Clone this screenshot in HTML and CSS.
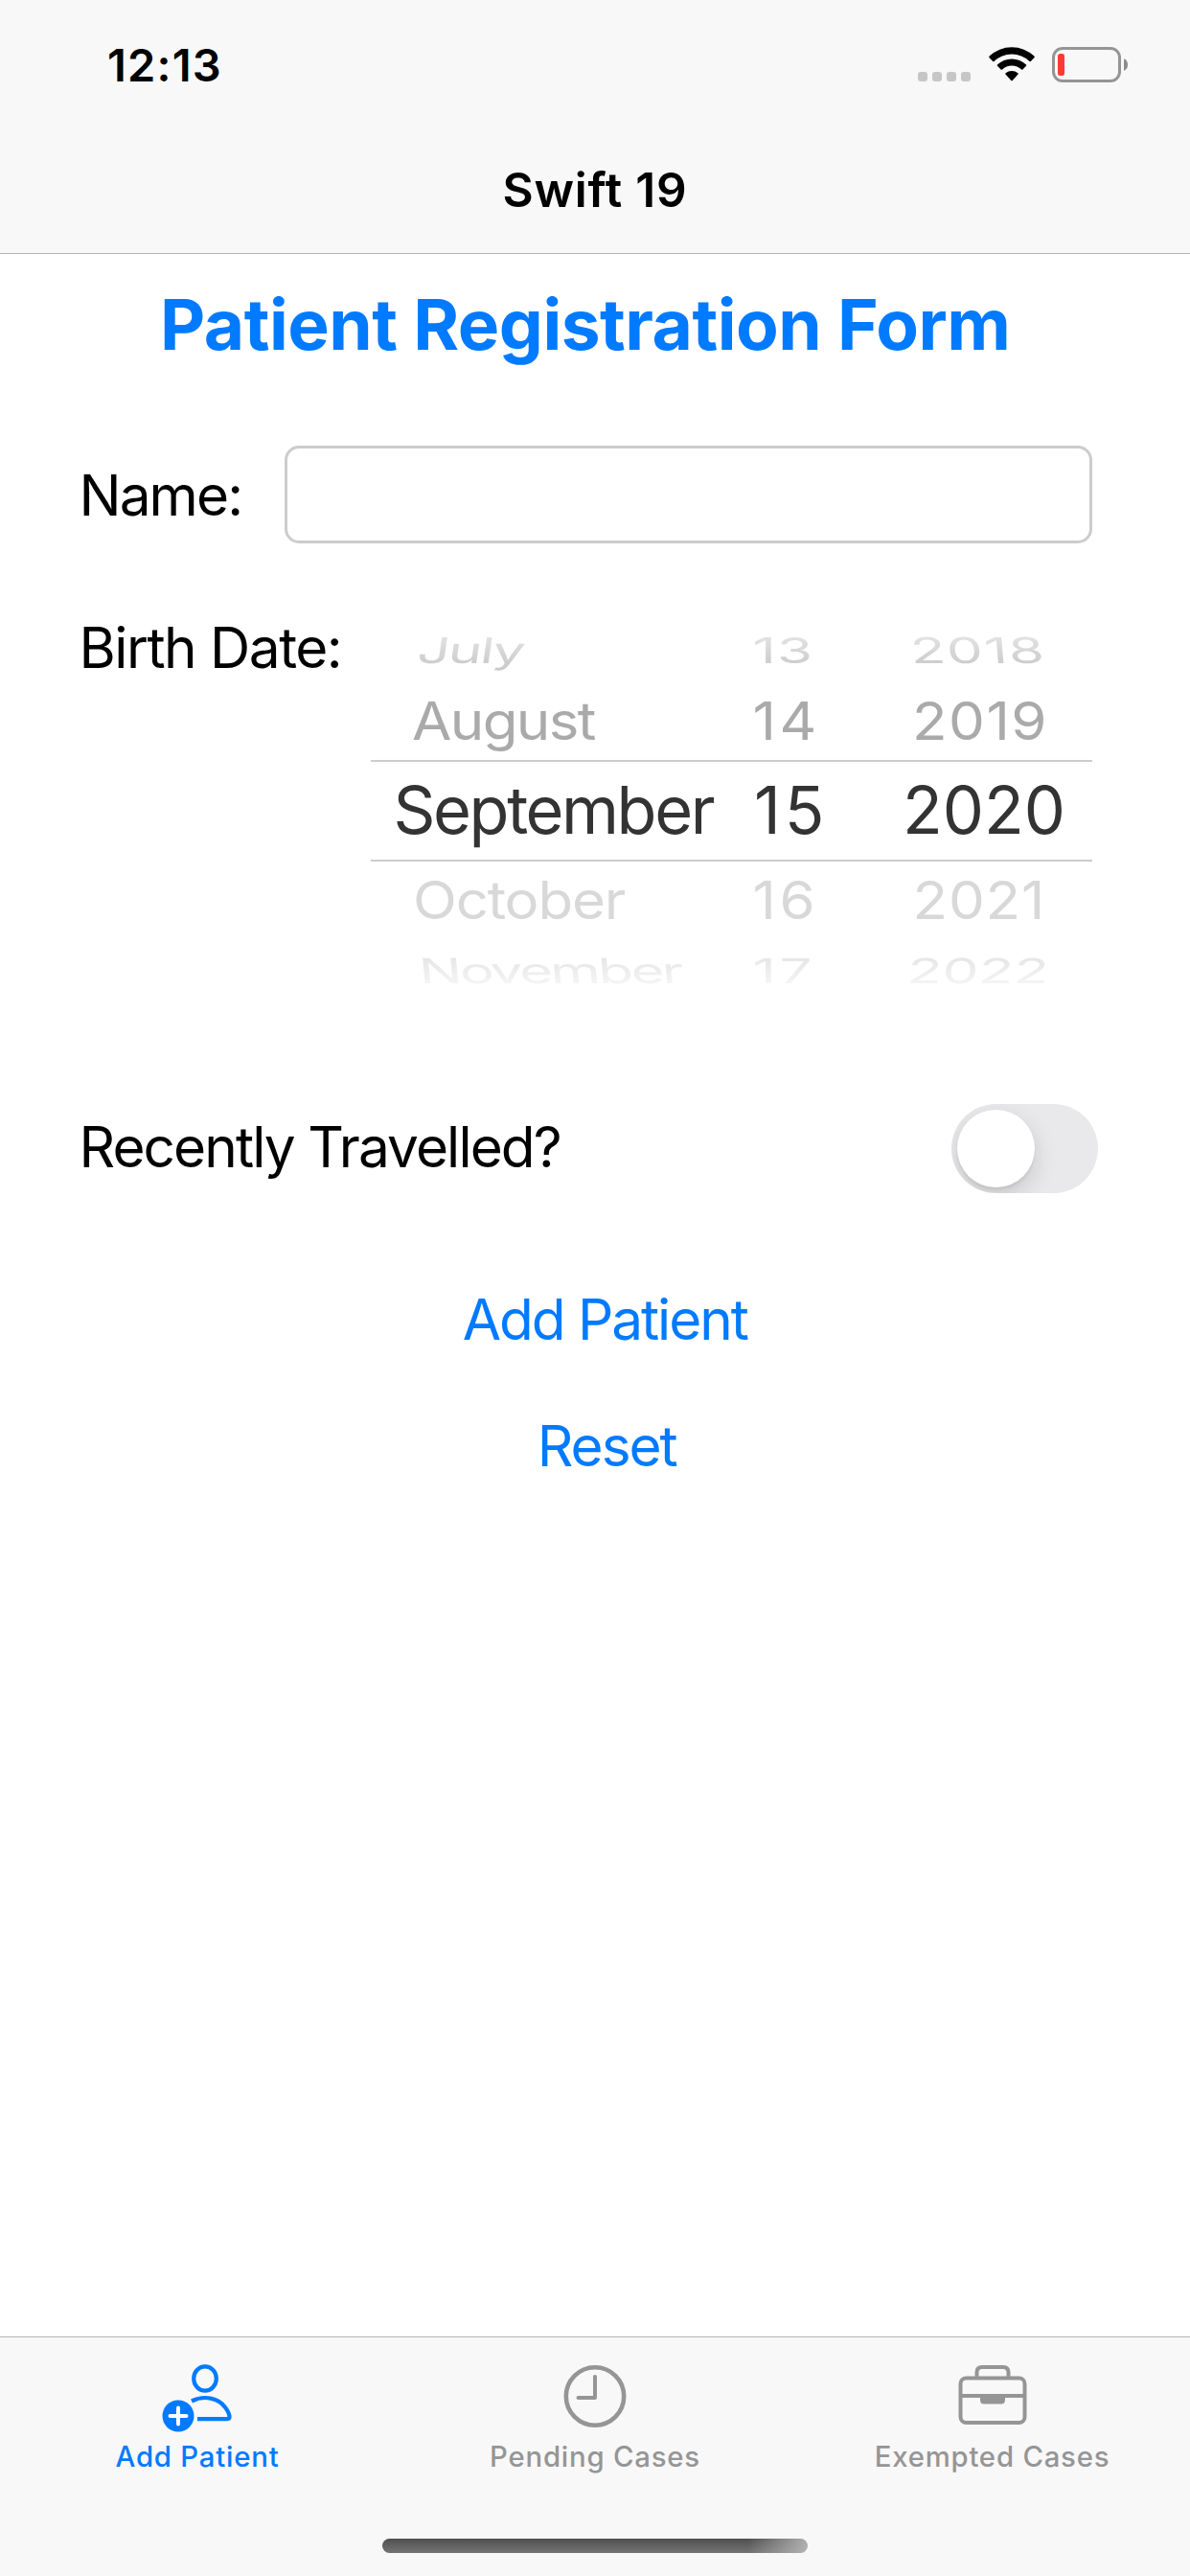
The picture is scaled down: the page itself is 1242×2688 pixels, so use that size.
FILE: index.html
```html
<!DOCTYPE html>
<html lang="en">
<head>
<meta charset="utf-8">
<title>Swift 19</title>
<link rel="stylesheet" href="styles.css">
</head>
<body>
<div class="screen">
  <header class="header">
    <div class="status">
      <span class="time">12:13</span>
      <div class="indicators">
        <svg class="signal" width="55" height="10" viewBox="0 0 55 10" fill="#c6c6c6"><rect width="10" height="10" rx="3"/><rect x="15" width="10" height="10" rx="3"/><rect x="30" width="10" height="10" rx="3"/><rect x="45" width="10" height="10" rx="3"/></svg>
        <svg class="wifi" width="48" height="36" viewBox="0 0 48 36"><path d="M.6 11.2Q-.2 10.4.6 9.6A34 34 0 0 1 47.4 9.6Q48.200 10.400 47.400 11.200L43.800 14.900Q43.200 15.500 42.500 14.900A27 27 0 0 0 5.500 14.900Q4.800 15.500 4.200 14.900ZM9 19.800Q8.400 19.100 9 18.400A21.700 21.700 0 0 1 39 18.400Q39.600 19.100 39 19.800L35.400 23.500Q34.700 24.100 34 23.500A14.800 14.800 0 0 0 14 23.500Q13.300 24.100 12.600 23.500ZM17.500 28.600Q16.900 27.900 17.600 27.200A10 10 0 0 1 30.400 27.200Q31.100 27.900 30.500 28.600L24.700 34.900Q24 35.600 23.300 34.900Z"/></svg>
        <svg class="battery" width="80" height="37" viewBox="0 0 80 37"><rect x="1.500" y="1.500" width="69" height="34" rx="9.500" fill="none" stroke="#959595" stroke-width="3"/><rect x="6" y="7" width="7" height="23" rx="2.500" fill="#ff3b30"/><path d="M75 12.200Q79 14 79 18.500T75 25Z" fill="#8b8b8b"/></svg>
      </div>
    </div>
    <div class="nav-title">Swift 19</div>
  </header>

  <main class="form">
    <h1 class="title">Patient Registration Form</h1>
    <div class="name-row">
      <label class="label" for="name">Name:</label>
      <input class="field" id="name" type="text">
    </div>
    <div class="birth-row">
      <span class="label birth-label">Birth Date:</span>
      <div class="picker">
        <div class="row far-above"><span class="m">July</span><span class="d">13</span><span class="y">2018</span></div>
        <div class="row above"><span class="m">August</span><span class="d">14</span><span class="y">2019</span></div>
        <div class="row current"><span class="m">September</span><span class="d">15</span><span class="y">2020</span></div>
        <div class="row below"><span class="m">October</span><span class="d">16</span><span class="y">2021</span></div>
        <div class="row far-below"><span class="m">November</span><span class="d">17</span><span class="y">2022</span></div>
      </div>
    </div>
    <div class="travel-row">
      <span class="label travel-label">Recently Travelled?</span>
      <div class="switch" role="switch" aria-checked="false"><div class="knob"></div></div>
    </div>
    <div class="actions">
      <a class="action">Add Patient</a>
      <a class="action reset">Reset</a>
    </div>
  </main>

  <footer class="footer">
    <nav class="tabs">
      <a class="tab active">
        <svg class="person" width="74" height="72" viewBox="0 0 74 72" fill="none" stroke="#007aff"><ellipse cx="45" cy="16" rx="11.800" ry="12.700" stroke-width="4.200"/><path d="M31 39.500C44 33 59 36 66 46C69 50 70.500 54 70.500 56Q70.500 58.200 67.500 58.200H37" stroke-width="4.200"/><circle cx="17" cy="55" r="16.500" fill="#007aff" stroke="none"/><path d="M17 46.500V63.500M8.500 55H25.500" stroke="#fff" stroke-width="4" stroke-linecap="round"/></svg>
        <span>Add Patient</span>
      </a>
      <a class="tab">
        <svg width="74" height="72" viewBox="0 0 74 72" fill="none" stroke="#959595"><circle cx="37" cy="34.500" r="30.200" stroke-width="4.600"/><path d="M37 14V36H19.500" stroke-width="4" stroke-linecap="round" stroke-linejoin="round"/></svg>
        <span>Pending Cases</span>
      </a>
      <a class="tab">
        <svg width="74" height="72" viewBox="0 0 74 72" fill="none" stroke="#959595" stroke-width="4"><rect x="3.500" y="15.500" width="67" height="46.500" rx="6"/><path d="M20.500 15V9.500Q20.500 4 26 4H48Q53.500 4 53.500 9.500V15M4 34H70"/><path d="M24 34H50V38Q50 42.500 46 42.500H28Q24 42.500 24 38Z" fill="#959595" stroke="none"/></svg>
        <span>Exempted Cases</span>
      </a>
    </nav>
    <div class="home"></div>
  </footer>
</div>
</body>
</html>
```
FILE: styles.css
```css
* { box-sizing: border-box; }
body { margin: 0; background: #fff; color: #000; font-family: Inter, "Liberation Sans", sans-serif; }
.screen { width: 1242px; height: 2688px; display: flex; flex-direction: column; overflow: hidden; }

.header { height: 265px; flex: none; background: #f8f8f8; border-bottom: 1px solid #b2b2b2; }
.status { height: 132px; display: flex; justify-content: space-between; padding: 0 64px 0 112px; }
.time { font-size: 47px; font-weight: 600; line-height: 136px; letter-spacing: 1.200px; }
.indicators { display: flex; align-items: flex-start; padding-top: 49px; }
.signal { margin: 26px 19px 0 0; }
.wifi { margin-right: 18px; }
.nav-title { text-align: center; font-size: 49.500px; font-weight: 600; line-height: 132px; letter-spacing: .800px; }

.form { flex: 1; padding: 0 102px 0 82.500px; }
.title { margin: 0; height: 147px; padding-left: 84.500px; color: #007aff; font-size: 73px; font-weight: 700; line-height: 147px; letter-spacing: -.500px; white-space: nowrap; }
.label { font-size: 58.500px; letter-spacing: -1.900px; white-space: nowrap; }
.name-row { margin-top: 53px; display: flex; height: 102px; align-items: center; justify-content: space-between; }
.field { width: 843px; height: 102px; border: 3px solid #ccc; border-radius: 15px; background: #fff; padding: 0 20px; font: inherit; font-size: 50px; }
.birth-row { margin-top: 76px; display: flex; justify-content: space-between; }
.birth-label { line-height: 66px; letter-spacing: -1.500px; }
.picker { width: 753px; }
.row { display: grid; grid-template-columns: 395px 158px 200px; font-size: 60px; white-space: nowrap; }
.row span { display: block; width: max-content; transform-origin: left center; }
.far-above { height: 71px; line-height: 71px; color: #ccc; mask-image: linear-gradient(rgba(0,0,0,.500) 25%, #000 70%); }
.above { height: 76px; line-height: 76px; margin-bottom: 3px; color: #aaa; }
.current { height: 106px; line-height: 102px; border: solid #ccc; border-width: 2px 0; color: #333; font-size: 68.500px; }
.below { height: 80px; line-height: 80px; color: #d8d8d8; }
.far-below { height: 68px; line-height: 68px; color: #e6e6e6; mask-image: linear-gradient(#000 30%, rgba(0,0,0,.350) 75%); }

/* Rows flatten and lean as the wheel turns away from the selected one */
.above span, .below span { transform: scaleY(.917); }
.far-above span { transform: scaleY(.620); }
.far-above .m { transform: scaleY(.620) skewX(-5deg); }
.far-above .y { transform: scaleY(.620) skewX(3deg); }
.far-below span { transform: scaleY(.600); }
.far-below .m { transform: scaleY(.600) skewX(3deg); }
.far-below .y { transform: scaleY(.600) skewX(-3deg); }

.far-above .m { margin-left: 49px; letter-spacing: -2px; }
.above .m { margin-left: 43px; letter-spacing: -1.600px; }
.current .m { margin-left: 23.500px; letter-spacing: -2.400px; }
.below .m { margin-left: 44px; letter-spacing: -1.200px; }
.far-below .m { margin-left: 50px; letter-spacing: -2.600px; }
.d { margin-left: 3.500px; letter-spacing: 3.500px; }
.far-above .d { letter-spacing: 1px; }
.current .d { margin-left: 5px; letter-spacing: 4px; }
.far-above .y { margin-left: 10px; letter-spacing: 1.300px; }
.above .y { margin-left: 12px; letter-spacing: 1.500px; }
.current .y { margin-left: 2px; }
.below .y { margin-left: 12.500px; letter-spacing: .800px; }
.far-below .y { margin-left: 7px; }

.travel-row { margin-top: 105px; display: flex; height: 93px; align-items: center; justify-content: space-between; margin-right: -6px; }
.travel-label { line-height: 90px; margin-bottom: 3px; }
.switch { width: 153px; height: 93px; border-radius: 47px; background: #e9e9eb; padding: 6px; overflow: hidden; }
.knob { width: 81px; height: 81px; border-radius: 50%; background: #fff; box-shadow: 0 9px 24px rgba(0,0,0,.150), 0 3px 3px rgba(0,0,0,.060); }
.actions { padding: 66px 0 0 40px; display: flex; flex-direction: column; align-items: center; }
.action { color: #007aff; font-size: 58.500px; line-height: 132px; letter-spacing: -2.050px; }
.reset { padding-left: 4px; }

.footer { height: 250px; flex: none; background: #f8f8f8; border-top: 1px solid #b2b2b2; display: flex; flex-direction: column; align-items: center; justify-content: space-between; padding-bottom: 24px; }
.tabs { width: 100%; display: grid; grid-template-columns: repeat(3, 1fr); }
.tab { display: flex; flex-direction: column; align-items: center; padding-top: 27px; color: #959595; font-size: 29.300px; font-weight: 500; line-height: 51px; letter-spacing: .800px; }
.tab.active { color: #007aff; }
.tab:first-child, .tab:last-child { padding-right: 2px; }
.person { margin-right: 1px; }
.tab:last-child { padding: 27px 0 0 1px; }
.home { width: 444px; height: 15px; border-radius: 8px; background: linear-gradient(90deg, transparent 86%, rgba(190,190,190,.850)), linear-gradient(#505050, #737373); }
```
